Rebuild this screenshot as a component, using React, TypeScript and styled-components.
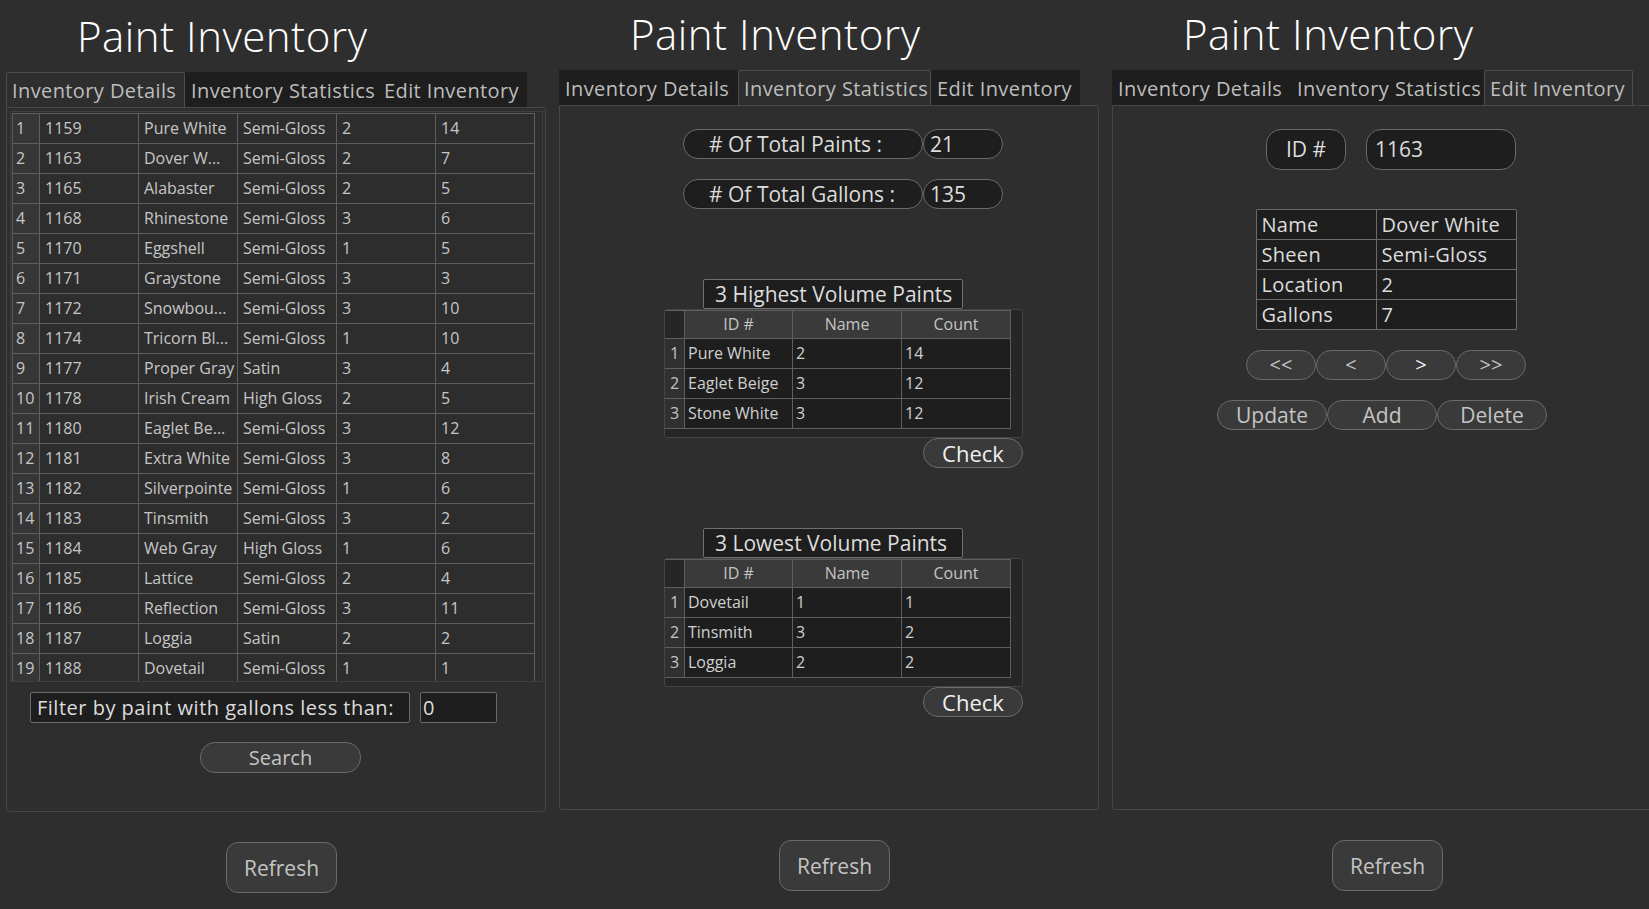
import React from "react";
import styled, { createGlobalStyle } from "styled-components";

const FONT = `"Open Sans", Lato, "DejaVu Sans", sans-serif`;

const GlobalStyle = createGlobalStyle`
  html, body { margin: 0; padding: 0; background: #2e2e2e; overflow: hidden; }
  body { font-family: ${FONT}; width: 1649px; height: 909px; }
  * { box-sizing: border-box; }
`;

const Page = styled.div`
  display: flex;
  gap: 1px;
  width: 1649px;
  height: 909px;
  overflow: hidden;
  background: #2e2e2e;
`;

const Column = styled.section<{ $drop: number }>`
  flex: 0 0 552px;
  display: flex;
  flex-direction: column;
  padding-top: ${(p) => p.$drop}px;
`;

const Title = styled.h1`
  margin: 0 0 0 77px;
  height: 70px;
  line-height: 68px;
  font-size: 42px;
  letter-spacing: 0.5px;
  font-weight: 300;
  color: #ffffff;
  white-space: nowrap;
`;

const TabBar = styled.div`
  display: flex;
  margin-left: 6px;
  height: 35px;
  width: 521px;
  background: #1e1e1e;
`;

const Tab = styled.div<{ $w: number; $active?: boolean }>`
  width: ${(p) => p.$w}px;
  height: 35px;
  padding-left: 5px;
  font-size: 20px;
  letter-spacing: 0.4px;
  line-height: 35px;
  color: #bdbdbd;
  white-space: nowrap;
  overflow: hidden;
  background: ${(p) => (p.$active ? "#2e2e2e" : "transparent")};
  border: 1px solid ${(p) => (p.$active ? "#4e4e4e" : "transparent")};
  border-bottom: none;
  border-radius: 2px 2px 0 0;
`;

const Panel = styled.div`
  margin-left: 6px;
  width: 540px;
  height: 705px;
  border: 1px solid #464646;
  border-radius: 0 3px 3px 3px;
  display: flex;
  flex-direction: column;
`;

const RefreshButton = styled.button`
  margin: 30px 0 0 226px;
  width: 111px;
  height: 51px;
  border-radius: 12px;
  background: #3a3a3a;
  border: 1px solid #6a6a6a;
  color: #c4c4c4;
  font-family: ${FONT};
  font-size: 21px;
  padding: 0;
`;

/* ---------- Inventory Details ---------- */

const GridFrame = styled.div`
  margin: 3px 0 0 3px;
  width: 533px;
  height: 571px;
  border: 1px solid #3f3f3f;
  padding: 1px;
  overflow: hidden;
`;

const DataGrid = styled.div`
  display: grid;
  grid-template-columns: 27px repeat(5, 99px);
  grid-auto-rows: 30px;
  border-top: 1px solid #5e5e5e;
  border-left: 1px solid #5e5e5e;
  width: 523px;
`;

const Cell = styled.div<{ $head?: boolean }>`
  border-right: 1px solid #5e5e5e;
  border-bottom: 1px solid #5e5e5e;
  padding: 0 ${(p) => (p.$head ? "3px" : "5px")};
  font-size: 16px;
  line-height: 29px;
  color: #c6c6c6;
  white-space: nowrap;
  overflow: hidden;
  background: ${(p) => (p.$head ? "#363636" : "#2d2d2d")};
`;

const FilterRow = styled.div`
  display: flex;
  gap: 10px;
  margin: 10px 0 0 23px;
`;

const FieldBox = styled.div<{ $w: number; $pad: number }>`
  width: ${(p) => p.$w}px;
  height: 31px;
  background: #1e1e1e;
  border: 1px solid #6a6a6a;
  border-radius: 2px;
  padding-left: ${(p) => p.$pad}px;
  font-size: 20px;
  letter-spacing: 0.5px;
  line-height: 29px;
  color: #dcdcdc;
  white-space: nowrap;
  overflow: hidden;
`;

const PillButton = styled.button<{ $w: number; $h?: number; $size?: number; $bright?: boolean }>`
  width: ${(p) => p.$w}px;
  height: ${(p) => p.$h ?? 30}px;
  border-radius: 15px;
  background: #3a3a3a;
  border: 1px solid #6a6a6a;
  color: ${(p) => (p.$bright ? "#f0f0f0" : "#c4c4c4")};
  font-family: ${FONT};
  font-size: ${(p) => p.$size ?? 20}px;
  line-height: 1;
  padding: 0;
  white-space: nowrap;
`;

const SearchWrap = styled.div`
  margin: 19px 0 0 193px;
`;

/* ---------- Inventory Statistics ---------- */

const StatsBody = styled.div`
  display: flex;
  flex-direction: column;
  padding: 23px 0 0 104px;
`;

const StatRow = styled.div<{ $top: number }>`
  display: flex;
  margin: ${(p) => p.$top}px 0 0 19px;
`;

const Pill = styled.div<{ $w: number; $h?: number; $pad?: number; $center?: boolean }>`
  width: ${(p) => p.$w}px;
  height: ${(p) => p.$h ?? 30}px;
  border-radius: 15px;
  background: #1e1e1e;
  border: 1px solid #6a6a6a;
  padding-left: ${(p) => p.$pad ?? 0}px;
  text-align: ${(p) => (p.$center ? "center" : "left")};
  font-size: 21px;
  line-height: ${(p) => (p.$h ?? 30) - 2}px;
  color: #dcdcdc;
  white-space: nowrap;
`;

const Section = styled.div<{ $top: number }>`
  display: flex;
  flex-direction: column;
  width: 359px;
  margin-top: ${(p) => p.$top}px;
`;

const SectionTitle = styled.div`
  margin-left: 39px;
  width: 260px;
  height: 30px;
  background: #1e1e1e;
  border: 1px solid #707070;
  border-radius: 2px;
  padding-left: 11px;
  font-size: 21px;
  line-height: 28px;
  color: #dcdcdc;
  white-space: nowrap;
`;

const TableFrame = styled.div`
  height: 129px;
  background: #262626;
  border: 1px solid #444444;
  border-radius: 3px;
`;

const StatGrid = styled.div`
  display: grid;
  grid-template-columns: 19px 107px 108px 108px;
  grid-template-rows: 27px 29px 29px 29px;
  gap: 1px;
  width: 346px;
  background: #5e5e5e;
  border-top: 1px solid #5e5e5e;
  border-right: 1px solid #5e5e5e;
  border-bottom: 1px solid #5e5e5e;
`;

const Corner = styled.div`
  background: #262626;
`;

const HeadCell = styled.div`
  background: #3a3a3a;
  text-align: center;
  font-size: 16px;
  line-height: 27px;
  color: #c4c4c4;
`;

const RowHead = styled.div`
  background: #303030;
  text-align: center;
  font-size: 16px;
  line-height: 29px;
  color: #c4c4c4;
`;

const StatCell = styled.div`
  background: #1e1e1e;
  padding-left: 3px;
  font-size: 16px;
  line-height: 29px;
  color: #d0d0d0;
  white-space: nowrap;
  overflow: hidden;
`;

const CheckWrap = styled.div`
  align-self: flex-end;
`;

/* ---------- Edit Inventory ---------- */

const EditBody = styled.div`
  display: flex;
  flex-direction: column;
  align-items: center;
  padding-top: 23px;
`;

const IdRow = styled.div`
  display: flex;
  gap: 20px;
  margin-left: 18px;
`;

const DetailGrid = styled.div`
  display: grid;
  grid-template-columns: 120px 140px;
  grid-auto-rows: 30px;
  margin: 39px 0 0 8px;
  border-top: 1px solid #6a6a6a;
  border-left: 1px solid #6a6a6a;
  border-radius: 2px;
`;

const DetailCell = styled.div`
  background: #1e1e1e;
  border-right: 1px solid #6a6a6a;
  border-bottom: 1px solid #6a6a6a;
  padding-left: 5px;
  font-size: 20px;
  letter-spacing: 0.3px;
  line-height: 29px;
  color: #dcdcdc;
  white-space: nowrap;
`;

const ButtonRow = styled.div<{ $top: number; $shift: number }>`
  display: flex;
  margin: ${(p) => p.$top}px 0 0 ${(p) => p.$shift}px;
`;

/* ---------- data ---------- */

const inventory: [string, string, string, string, string][] = [
  ["1159", "Pure White", "Semi-Gloss", "2", "14"],
  ["1163", "Dover W...", "Semi-Gloss", "2", "7"],
  ["1165", "Alabaster", "Semi-Gloss", "2", "5"],
  ["1168", "Rhinestone", "Semi-Gloss", "3", "6"],
  ["1170", "Eggshell", "Semi-Gloss", "1", "5"],
  ["1171", "Graystone", "Semi-Gloss", "3", "3"],
  ["1172", "Snowbou...", "Semi-Gloss", "3", "10"],
  ["1174", "Tricorn Bl...", "Semi-Gloss", "1", "10"],
  ["1177", "Proper Gray", "Satin", "3", "4"],
  ["1178", "Irish Cream", "High Gloss", "2", "5"],
  ["1180", "Eaglet Be...", "Semi-Gloss", "3", "12"],
  ["1181", "Extra White", "Semi-Gloss", "3", "8"],
  ["1182", "Silverpointe", "Semi-Gloss", "1", "6"],
  ["1183", "Tinsmith", "Semi-Gloss", "3", "2"],
  ["1184", "Web Gray", "High Gloss", "1", "6"],
  ["1185", "Lattice", "Semi-Gloss", "2", "4"],
  ["1186", "Reflection", "Semi-Gloss", "3", "11"],
  ["1187", "Loggia", "Satin", "2", "2"],
  ["1188", "Dovetail", "Semi-Gloss", "1", "1"],
];

const highest: [string, string, string][] = [
  ["Pure White", "2", "14"],
  ["Eaglet Beige", "3", "12"],
  ["Stone White", "3", "12"],
];

const lowest: [string, string, string][] = [
  ["Dovetail", "1", "1"],
  ["Tinsmith", "3", "2"],
  ["Loggia", "2", "2"],
];

const details: [string, string][] = [
  ["Name", "Dover White"],
  ["Sheen", "Semi-Gloss"],
  ["Location", "2"],
  ["Gallons", "7"],
];

const TABS: [string, number][] = [
  ["Inventory Details", 179],
  ["Inventory Statistics", 193],
  ["Edit Inventory", 149],
];

function Tabs({ active }: { active: number }) {
  return (
    <TabBar>
      {TABS.map(([label, w], i) => (
        <Tab key={label} $w={w} $active={i === active}>
          {label}
        </Tab>
      ))}
    </TabBar>
  );
}

function Shell({ active, drop, children }: { active: number; drop: number; children: React.ReactNode }) {
  return (
    <Column $drop={drop}>
      <Title>Paint Inventory</Title>
      <Tabs active={active} />
      <Panel>{children}</Panel>
      <RefreshButton>Refresh</RefreshButton>
    </Column>
  );
}

function StatsTable({ title, rows, top }: { title: string; rows: [string, string, string][]; top: number }) {
  return (
    <Section $top={top}>
      <SectionTitle>{title}</SectionTitle>
      <TableFrame>
        <StatGrid>
          <Corner />
          <HeadCell>ID #</HeadCell>
          <HeadCell>Name</HeadCell>
          <HeadCell>Count</HeadCell>
          {rows.map((r, i) => (
            <React.Fragment key={i}>
              <RowHead>{i + 1}</RowHead>
              {r.map((v, j) => (
                <StatCell key={j}>{v}</StatCell>
              ))}
            </React.Fragment>
          ))}
        </StatGrid>
      </TableFrame>
      <CheckWrap>
        <PillButton $w={100} $size={22} $bright>
          Check
        </PillButton>
      </CheckWrap>
    </Section>
  );
}

export default function App() {
  return (
    <>
      <GlobalStyle />
      <Page>
        <Shell active={0} drop={2}>
          <GridFrame>
            <DataGrid>
              {inventory.map((row, i) => (
                <React.Fragment key={row[0]}>
                  <Cell $head>{i + 1}</Cell>
                  {row.map((v, j) => (
                    <Cell key={j}>{v}</Cell>
                  ))}
                </React.Fragment>
              ))}
            </DataGrid>
          </GridFrame>
          <FilterRow>
            <FieldBox $w={380} $pad={6}>
              Filter by paint with gallons less than:
            </FieldBox>
            <FieldBox $w={77} $pad={2}>
              0
            </FieldBox>
          </FilterRow>
          <SearchWrap>
            <PillButton $w={161} $h={31}>
              Search
            </PillButton>
          </SearchWrap>
        </Shell>

        <Shell active={1} drop={0}>
          <StatsBody>
            <StatRow $top={0}>
              <Pill $w={240} $pad={25}># Of Total Paints :</Pill>
              <Pill $w={80} $pad={6}>21</Pill>
            </StatRow>
            <StatRow $top={20}>
              <Pill $w={240} $pad={25}># Of Total Gallons :</Pill>
              <Pill $w={80} $pad={6}>135</Pill>
            </StatRow>
            <StatsTable title="3 Highest Volume Paints" rows={highest} top={70} />
            <StatsTable title="3 Lowest Volume Paints" rows={lowest} top={60} />
          </StatsBody>
        </Shell>

        <Shell active={2} drop={0}>
          <EditBody>
            <IdRow>
              <Pill $w={80} $h={41} $center>
                ID #
              </Pill>
              <Pill $w={150} $h={41} $pad={8}>
                1163
              </Pill>
            </IdRow>
            <DetailGrid>
              {details.map(([k, v]) => (
                <React.Fragment key={k}>
                  <DetailCell>{k}</DetailCell>
                  <DetailCell>{v}</DetailCell>
                </React.Fragment>
              ))}
            </DetailGrid>
            <ButtonRow $top={20} $shift={8}>
              <PillButton $w={70}>&lt;&lt;</PillButton>
              <PillButton $w={70}>&lt;</PillButton>
              <PillButton $w={70} $bright>&gt;</PillButton>
              <PillButton $w={70}>&gt;&gt;</PillButton>
            </ButtonRow>
            <ButtonRow $top={20} $shift={0}>
              <PillButton $w={110} $size={21}>Update</PillButton>
              <PillButton $w={110} $size={21}>Add</PillButton>
              <PillButton $w={110} $size={21}>Delete</PillButton>
            </ButtonRow>
          </EditBody>
        </Shell>
      </Page>
    </>
  );
}
